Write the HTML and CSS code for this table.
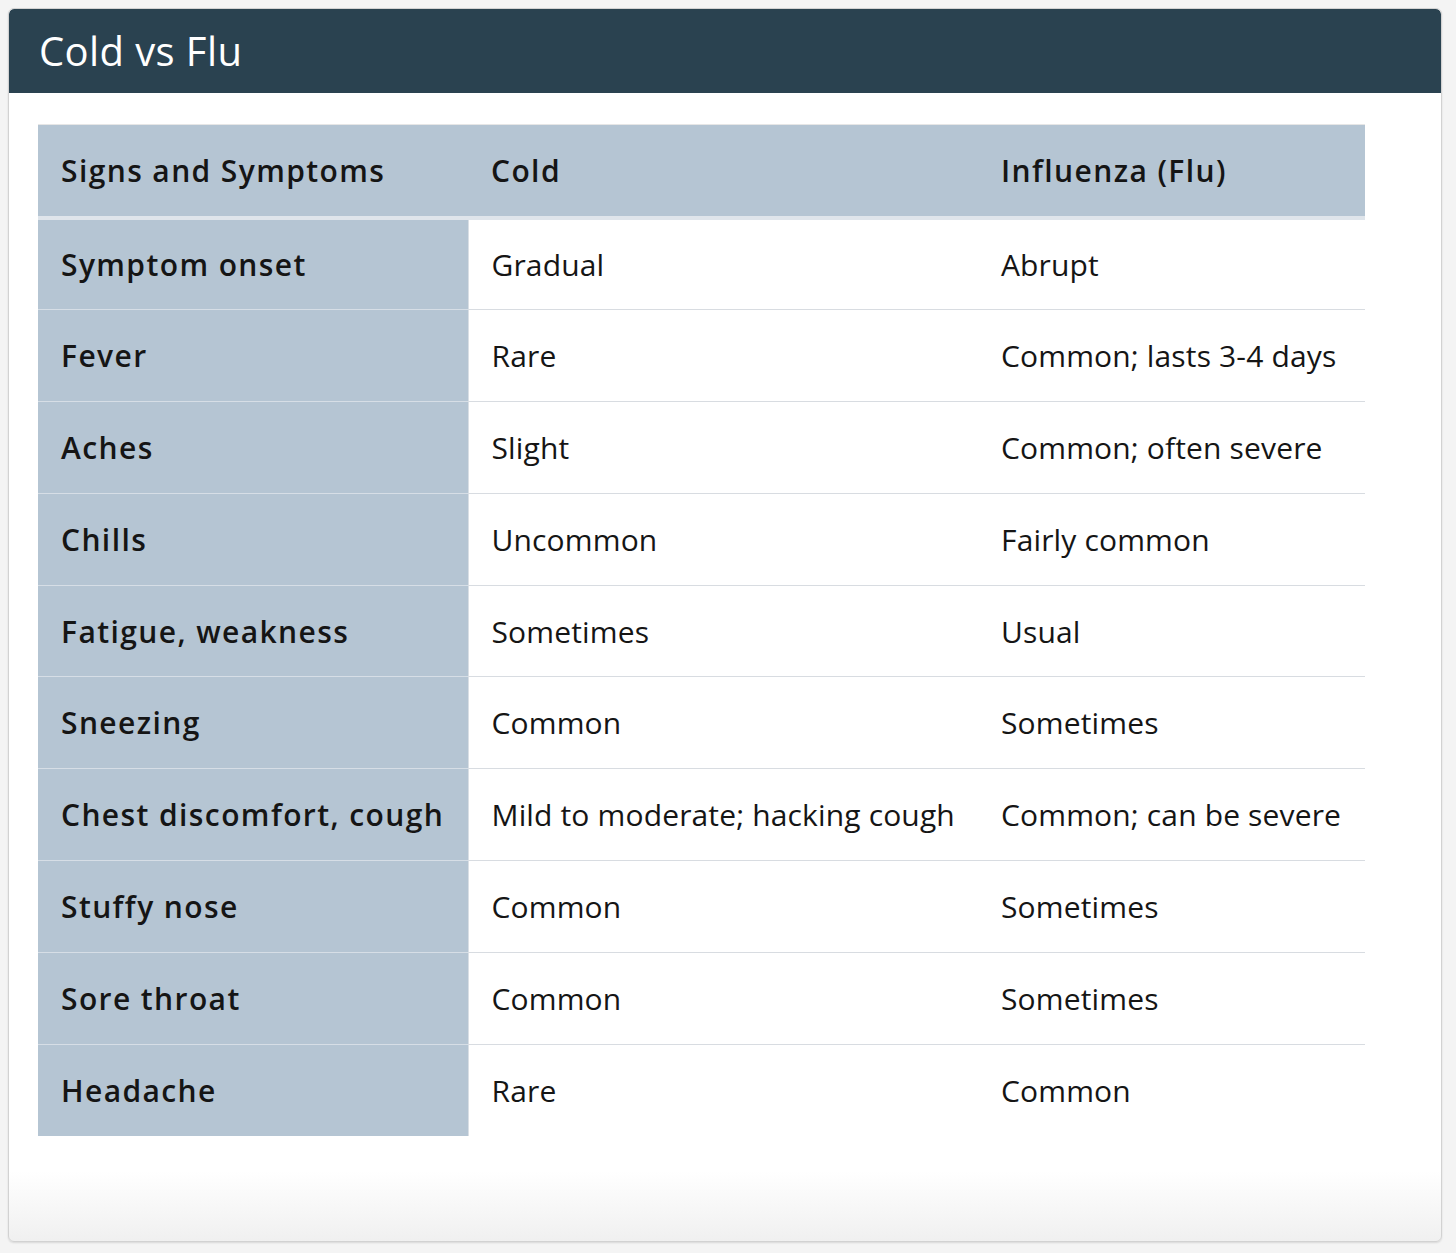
FILE: index.html
```html
<!DOCTYPE html>
<html>
<head>
<meta charset="utf-8">
<link rel="stylesheet" href="styles.css">
</head>
<body>
<div class="card">
  <div class="card-head">Cold vs Flu</div>
  <div class="card-body">
    <table class="cmp">
      <thead>
        <tr><th class="c1">Signs and Symptoms</th><th class="c2">Cold</th><th class="c3">Influenza (Flu)</th></tr>
      </thead>
      <tbody>
        <tr><th>Symptom onset</th><td>Gradual</td><td>Abrupt</td></tr>
        <tr><th>Fever</th><td>Rare</td><td>Common; lasts 3-4 days</td></tr>
        <tr><th>Aches</th><td>Slight</td><td>Common; often severe</td></tr>
        <tr><th>Chills</th><td>Uncommon</td><td>Fairly common</td></tr>
        <tr><th>Fatigue, weakness</th><td>Sometimes</td><td>Usual</td></tr>
        <tr><th>Sneezing</th><td>Common</td><td>Sometimes</td></tr>
        <tr><th>Chest discomfort, cough</th><td>Mild to moderate; hacking cough</td><td>Common; can be severe</td></tr>
        <tr><th>Stuffy nose</th><td>Common</td><td>Sometimes</td></tr>
        <tr><th>Sore throat</th><td>Common</td><td>Sometimes</td></tr>
        <tr><th>Headache</th><td>Rare</td><td>Common</td></tr>
      </tbody>
    </table>
  </div>
</div>
</body>
</html>
```

FILE: styles.css
```css
html, body {
  margin: 0;
  padding: 0;
}
body {
  background: #f4f4f4;
  padding: 8px 14px 10px 8px;
  font-family: "Open Sans", "Liberation Sans", sans-serif;
}
.card {
  border: 1px solid #d2d2d2;
  border-radius: 6px;
  background: linear-gradient(to bottom, #ffffff 0, #ffffff calc(100% - 70px), #f0f0f0 100%);
  overflow: hidden;
  box-shadow: 0 1px 2px rgba(0,0,0,0.12);
  height: 1234px;
  box-sizing: border-box;
}
.card-head {
  background: #2a4250;
  color: #ffffff;
  font-size: 40px;
  letter-spacing: 0.4px;
  line-height: 84px;
  height: 84px;
  padding-left: 30px;
  border-radius: 5px 5px 0 0;
}
.card-body {
  padding: 31px 29px 0 29px;
}
.cmp {
  width: 1327px;
  border-collapse: collapse;
  font-size: 30px;
  color: #151515;
}
.cmp thead th {
  background: #b5c5d3;
  text-align: left;
  font-weight: 600;
  letter-spacing: 1.4px;
  height: 93px;
  padding: 0 0 0 23px;
  border-top: 1px solid #e6e6e6;
  border-bottom: 4px solid #dfe5eb;
  box-sizing: border-box;
}
.cmp th.c1 { width: 430px; }
.cmp th.c2 { width: 510px; }
.cmp th.c3 { width: 387px; }
.cmp tbody tr {
  height: 91.9px;
}
.cmp tbody th {
  background: #b5c5d3;
  text-align: left;
  font-weight: 600;
  letter-spacing: 1.4px;
  padding: 0 0 0 23px;
  border-top: 1px solid #d6dee6;
  border-right: 1px solid #d9dfe5;
}
.cmp tbody td {
  padding: 0 0 0 23px;
  font-weight: 400;
  letter-spacing: 0.15px;
  border-top: 1px solid #d8dce1;
  white-space: nowrap;
}
.cmp tbody tr:first-child th,
.cmp tbody tr:first-child td {
  border-top: none;
}
```
